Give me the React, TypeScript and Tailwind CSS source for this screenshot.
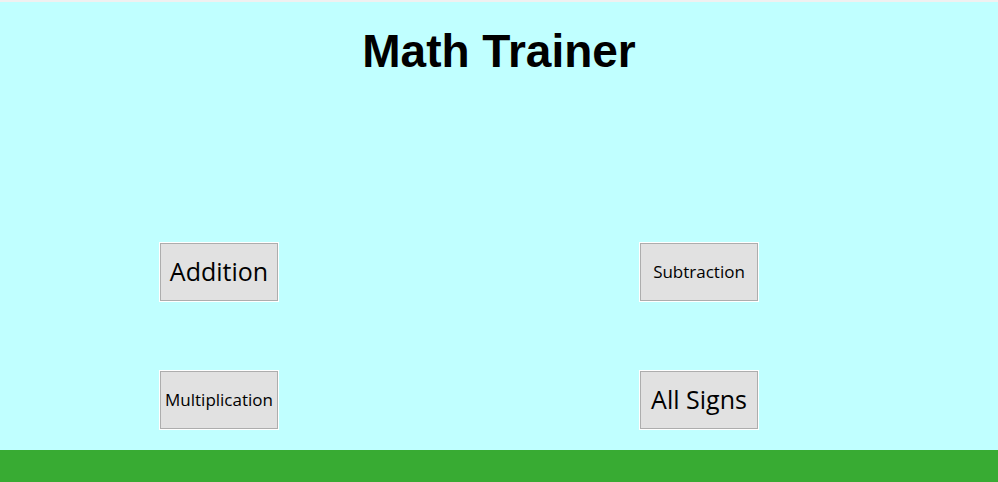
const modes = [
  { label: 'Addition', size: 'text-[25px]' },
  { label: 'Subtraction', size: 'text-[17px]' },
  { label: 'Multiplication', size: 'text-[17px]' },
  { label: 'All Signs', size: 'text-[25px]' },
];

export default function App() {
  return (
    <div className="flex h-[482px] w-full flex-col bg-[#c0ffff]">
      <div className="h-[2px] bg-[#f0f0f0]" />
      <h1 className="mt-[26px] text-center text-[46px] font-bold leading-[46px] text-black [font-family:'Liberation_Sans',Arial,sans-serif]">
        Math Trainer
      </h1>

      <div className="mt-[169px] grid w-fit grid-cols-[118px_118px] gap-x-[362px] gap-y-[70px] pl-[160px]">
        {modes.map(m => (
          <button
            key={m.label}
            className={`flex h-[58px] w-[118px] items-center justify-center border border-[#adadad] bg-[#e1e1e1] text-black ring-1 ring-white [font-family:'Open_Sans',sans-serif] ${m.size}`}
          >
            {m.label}
          </button>
        ))}
      </div>

      <div className="mt-auto h-[32px] bg-[#38ab33]" />
    </div>
  );
}
